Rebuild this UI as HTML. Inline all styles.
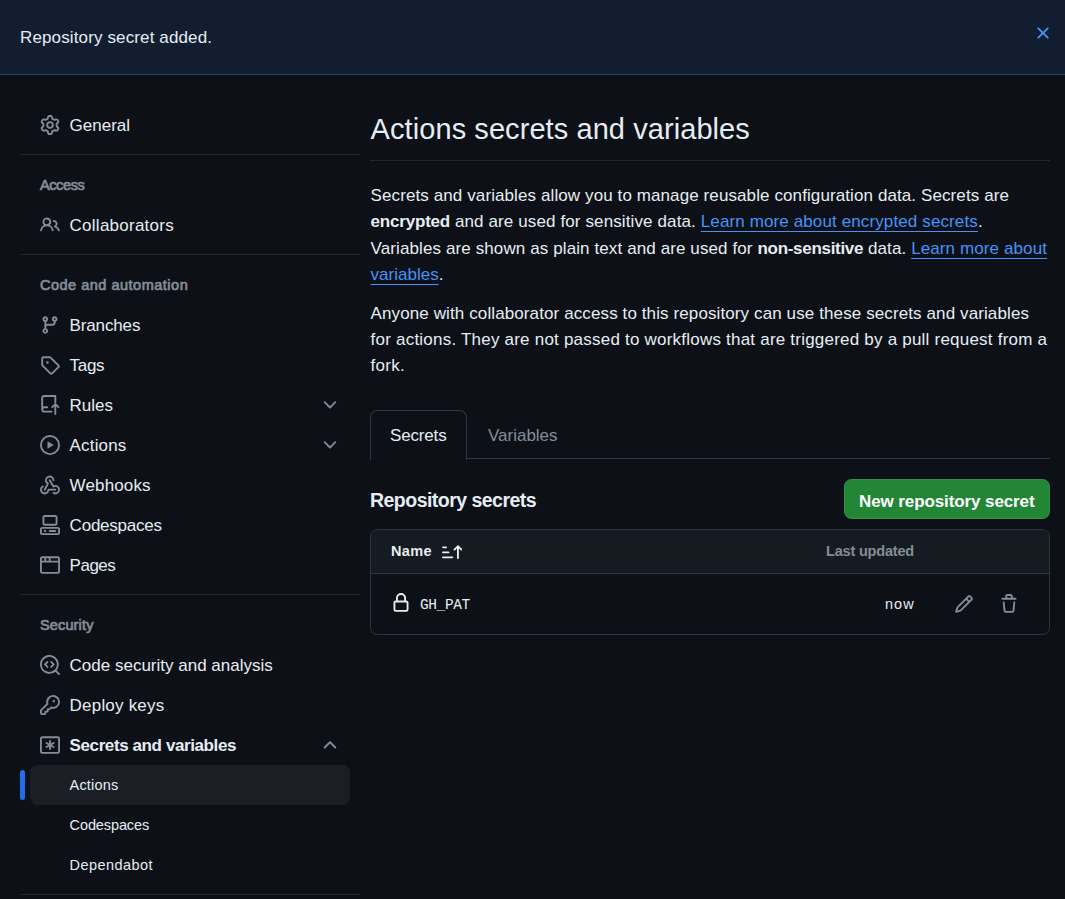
<!DOCTYPE html>
<html lang="en">
<head>
<meta charset="utf-8">
<title>Actions secrets and variables</title>
<style>
*{box-sizing:border-box;margin:0;padding:0}
html,body{width:1065px;height:899px;overflow:hidden;background:#0d1117}
body{font-family:"Liberation Sans",sans-serif;color:#e6edf3;font-size:17px;position:relative}
svg{display:block;fill:currentColor}
.flash{position:absolute;left:0;top:0;width:1065px;height:75px;background:#121d2f;border-bottom:1px solid #1f4478}
.flash .msg{position:absolute;left:20px;top:25px;line-height:26px;white-space:nowrap}
.flash .x{position:absolute;left:1033px;top:23px;width:20px;height:20px;color:#4493f8}
.side{position:absolute;left:20px;top:105px;width:340px}
.item{position:relative;height:40px;margin:0 10px;border-radius:7.5px}
.item .ic{position:absolute;left:10px;top:10px;width:20px;height:20px;color:#848d97}
.item .tx{position:absolute;left:39.6px;top:1px;line-height:40px;white-space:nowrap}
.item .ch{position:absolute;left:290px;top:10px;width:20px;height:20px;color:#848d97}
.item.b .tx{font-weight:bold}
.sub .tx{font-size:14.5px;top:0}
.sub.act{background:#1b1f25}
.sub.act:before{content:"";position:absolute;left:-10px;top:5px;width:5px;height:30px;border-radius:3px;background:#1f6feb}
.hr{height:1px;background:#21262d;margin:9px 0 10px}
.hd{height:40px;padding:0 20px;line-height:40px;font-size:14.5px;font-weight:normal;-webkit-text-stroke:0.7px currentColor;color:#848d97;white-space:nowrap}
.main{position:absolute;left:370px;top:0;width:680px}
h1{position:absolute;left:0.6px;top:109px;font-size:29px;font-weight:normal;line-height:40px;white-space:nowrap}
.mhr{position:absolute;left:0;top:160px;width:680px;height:1px;background:#21262d}
.ln{position:absolute;left:0.6px;line-height:26px;white-space:nowrap}
a{color:#4493f8;text-decoration:underline;text-underline-offset:4px;text-decoration-thickness:1px}
b{font-weight:bold}
.tabline{position:absolute;left:0;top:458px;width:680px;height:1px;background:#30363d}
.tab{position:absolute;top:410px;height:49px;line-height:50px;white-space:nowrap}
.tab.sel{left:0;width:97px;height:50px;border:1px solid #30363d;border-bottom:0;border-radius:7.5px 7.5px 0 0;background:#0d1117}
.tab.sel span{position:absolute;left:20px;top:0}
.tab.var{left:118px;color:#848d97;top:411px}
h2{position:absolute;left:0;top:485px;font-size:19.5px;line-height:30px;font-weight:bold;white-space:nowrap}
.btn{position:absolute;left:474px;top:479px;width:206px;height:40px;border-radius:7.5px;background:#238636;border:1px solid #34904a;color:#fff;font-weight:bold;line-height:43px;white-space:nowrap}
.btn span{position:absolute;left:15px;top:0}
.tbl{position:absolute;left:0;top:529px;width:680px;height:106px;border:1px solid #30363d;border-radius:7.5px;overflow:hidden}
.th{position:absolute;left:0;top:0;width:678px;height:44px;background:#161b22;border-bottom:1px solid #30363d;font-size:14.5px;line-height:44px;white-space:nowrap}
.th .name{position:absolute;left:20px;top:-1px;font-weight:bold}
.th .sort{position:absolute;left:71px;top:12px;width:20px;height:20px}
.th .lu{position:absolute;left:455px;top:-1px;color:#848d97;font-weight:bold}
.tr{position:absolute;left:0;top:44px;width:678px;height:60px}
.tr .lock{position:absolute;left:20px;top:19px;width:20px;height:20px}
.tr .code{white-space:nowrap;position:absolute;left:50px;top:19px;line-height:24px;font-family:"Liberation Mono",monospace;font-size:14.5px}
.tr .now{position:absolute;left:515px;top:18px;white-space:nowrap;line-height:24px;font-size:14.5px}
.tr .pen{position:absolute;left:583px;top:20px;width:20px;height:20px;color:#848d97}
.tr .trash{position:absolute;left:628px;top:20px;width:20px;height:20px;color:#848d97}
/*FIT*/
#msg{letter-spacing:0.131px}
#t1{letter-spacing:-0.001px}
#t2{letter-spacing:0.251px}
#t3{letter-spacing:-0.142px}
#t4{letter-spacing:-0.335px}
#t5{letter-spacing:0.000px}
#t6{letter-spacing:0.166px}
#t7{letter-spacing:0.140px}
#t8{letter-spacing:-0.222px}
#t9{letter-spacing:-0.500px}
#t10{letter-spacing:-0.000px}
#t11{letter-spacing:0.200px}
#t12{letter-spacing:-0.400px}
#t13{letter-spacing:0.167px}
#t14{letter-spacing:-0.112px}
#t15{letter-spacing:0.446px}
#h1{letter-spacing:-0.400px}
#h2{letter-spacing:0.502px}
#h3{letter-spacing:0.143px}
#ttl{letter-spacing:0.072px}
#l1{letter-spacing:0.099px}
#l2{letter-spacing:0.119px}
#l3{letter-spacing:0.106px}
#l4{letter-spacing:0.001px}
#l5{letter-spacing:0.108px}
#l6{letter-spacing:0.216px}
#l7{letter-spacing:0.250px}
#tabs{letter-spacing:-0.167px;margin-left:-1.00px}
#tabv{letter-spacing:-0.005px;margin-left:0.00px}
#rs{letter-spacing:-0.528px}
#btn{letter-spacing:-0.100px;margin-left:-1.00px}
#name{letter-spacing:0.332px;margin-left:0.00px}
#lu{letter-spacing:-0.184px;margin-left:-0.00px}
#code{letter-spacing:-0.400px;margin-left:-1.00px}
#now{letter-spacing:1.000px;margin-left:-1.00px}
/*ENDFIT*/
#l2 b{letter-spacing:-0.2px}
#l3 b{letter-spacing:-0.3px}
</style>
</head>
<body>
<div class="flash">
  <div class="msg" id="msg">Repository secret added.</div>
  <svg class="x" viewBox="0 0 16 16"><path d="M3.72 3.72a.75.75 0 0 1 1.06 0L8 6.94l3.22-3.22a.749.749 0 0 1 1.275.326.749.749 0 0 1-.215.734L9.06 8l3.22 3.22a.749.749 0 0 1-.326 1.275.749.749 0 0 1-.734-.215L8 9.06l-3.22 3.22a.751.751 0 0 1-1.042-.018.751.751 0 0 1-.018-1.042L6.94 8 3.72 4.78a.75.75 0 0 1 0-1.06Z"/></svg>
</div>
<div class="side" id="side">
  <div class="item"><svg class="ic" viewBox="0 0 16 16"><path d="M8 0a8.2 8.2 0 0 1 .701.031C9.444.095 9.99.645 10.16 1.29l.288 1.107c.018.066.079.158.212.224.231.114.454.243.668.386.123.082.233.09.299.071l1.103-.303c.644-.176 1.392.021 1.82.63.27.385.506.792.704 1.218.315.675.111 1.422-.364 1.891l-.814.806c-.049.048-.098.147-.088.294.016.257.016.515 0 .772-.01.147.038.246.088.294l.814.806c.475.469.679 1.216.364 1.891a7.977 7.977 0 0 1-.704 1.217c-.428.61-1.176.807-1.82.63l-1.102-.302c-.067-.019-.177-.011-.3.071a5.909 5.909 0 0 1-.668.386c-.133.066-.194.158-.211.224l-.29 1.106c-.168.646-.715 1.196-1.458 1.26a8.006 8.006 0 0 1-1.402 0c-.743-.064-1.289-.614-1.458-1.26l-.289-1.106c-.018-.066-.079-.158-.212-.224a5.738 5.738 0 0 1-.668-.386c-.123-.082-.233-.09-.299-.071l-1.103.303c-.644.176-1.392-.021-1.82-.63a8.12 8.12 0 0 1-.704-1.218c-.315-.675-.111-1.422.363-1.891l.815-.806c.05-.048.098-.147.088-.294a6.214 6.214 0 0 1 0-.772c.01-.147-.038-.246-.088-.294l-.815-.806C.635 6.045.431 5.298.746 4.623a7.92 7.92 0 0 1 .704-1.217c.428-.61 1.176-.807 1.82-.63l1.102.302c.067.019.177.011.3-.071.214-.143.437-.272.668-.386.133-.066.194-.158.211-.224l.29-1.106C6.009.645 6.556.095 7.299.03 7.53.01 7.764 0 8 0Zm-.571 1.525c-.036.003-.108.036-.137.146l-.289 1.105c-.147.561-.549.967-.998 1.189-.173.086-.34.183-.5.29-.417.278-.97.423-1.529.27l-1.103-.303c-.109-.03-.175.016-.195.045-.22.312-.412.644-.573.99-.014.031-.021.11.059.19l.815.806c.411.406.562.957.53 1.456a4.709 4.709 0 0 0 0 .582c.032.499-.119 1.05-.53 1.456l-.815.806c-.081.08-.073.159-.059.19.162.346.353.677.573.989.02.03.085.076.195.046l1.102-.303c.56-.153 1.113-.008 1.53.27.161.107.328.204.501.29.447.222.85.629.997 1.189l.289 1.105c.029.109.101.143.137.146a6.6 6.6 0 0 0 1.142 0c.036-.003.108-.036.137-.146l.289-1.105c.147-.561.549-.967.998-1.189.173-.086.34-.183.5-.29.417-.278.97-.423 1.529-.27l1.103.303c.109.029.175-.016.195-.045.22-.313.411-.644.573-.99.014-.031.021-.11-.059-.19l-.815-.806c-.411-.406-.562-.957-.53-1.456a4.709 4.709 0 0 0 0-.582c-.032-.499.119-1.05.53-1.456l.815-.806c.081-.08.073-.159.059-.19a6.464 6.464 0 0 0-.573-.989c-.02-.03-.085-.076-.195-.046l-1.102.303c-.56.153-1.113.008-1.53-.27a4.44 4.44 0 0 0-.501-.29c-.447-.222-.85-.629-.997-1.189l-.289-1.105c-.029-.11-.101-.143-.137-.146a6.6 6.6 0 0 0-1.142 0ZM11 8a3 3 0 1 1-6 0 3 3 0 0 1 6 0ZM9.5 8a1.5 1.5 0 1 0-3.001.001A1.5 1.5 0 0 0 9.500 8Z"/></svg><span class="tx" id="t1">General</span></div>
  <div class="hr"></div>
  <div class="hd"><span id="h1">Access</span></div>
  <div class="item"><svg class="ic" viewBox="0 0 16 16"><path d="M2 5.5a3.5 3.5 0 1 1 5.898 2.549 5.508 5.508 0 0 1 3.034 4.084.75.75 0 1 1-1.482.235 4 4 0 0 0-7.9 0 .75.75 0 0 1-1.482-.236A5.507 5.507 0 0 1 3.102 8.05 3.493 3.493 0 0 1 2 5.5ZM11 4a3.001 3.001 0 0 1 2.22 5.018 5.01 5.01 0 0 1 2.56 3.012.749.749 0 0 1-.885.954.752.752 0 0 1-.549-.514 3.507 3.507 0 0 0-2.522-2.372.75.75 0 0 1-.574-.73v-.352a.75.75 0 0 1 .416-.672A1.5 1.5 0 0 0 11 5.5.75.75 0 0 1 11 4Zm-5.5-.5a2 2 0 1 0-.001 3.999A2 2 0 0 0 5.5 3.5Z"/></svg><span class="tx" id="t2">Collaborators</span></div>
  <div class="hr"></div>
  <div class="hd"><span id="h2">Code and automation</span></div>
  <div class="item"><svg class="ic" viewBox="0 0 16 16"><path d="M9.5 3.25a2.25 2.25 0 1 1 3 2.122V6A2.5 2.5 0 0 1 10 8.5H6a1 1 0 0 0-1 1v1.128a2.251 2.251 0 1 1-1.5 0V5.372a2.25 2.25 0 1 1 1.5 0v1.836A2.493 2.493 0 0 1 6 7h4a1 1 0 0 0 1-1v-.628A2.25 2.25 0 0 1 9.5 3.25Zm-6 0a.75.75 0 1 0 1.5 0 .75.75 0 0 0-1.500 0Zm8.25-.75a.75.75 0 1 0 0 1.5.75.75 0 0 0 0-1.500ZM4.250 12a.75.75 0 1 0 0 1.5.75.75 0 0 0 0-1.500Z"/></svg><span class="tx" id="t3">Branches</span></div>
  <div class="item"><svg class="ic" viewBox="0 0 16 16"><path d="M1 7.775V2.75C1 1.784 1.784 1 2.75 1h5.025c.464 0 .91.184 1.238.513l6.25 6.25a1.75 1.750 0 0 1 0 2.474l-5.026 5.026a1.75 1.750 0 0 1-2.474 0l-6.25-6.250A1.752 1.752 0 0 1 1 7.775Zm1.500 0c0 .066.026.13.073.177l6.25 6.25a.25.250 0 0 0 .354 0l5.025-5.025a.25.250 0 0 0 0-.354l-6.250-6.250a.25.250 0 0 0-.177-.073H2.750a.25.250 0 0 0-.250.250ZM6 5a1 1 0 1 1 0 2 1 1 0 0 1 0-2Z"/></svg><span class="tx" id="t4">Tags</span></div>
  <div class="item"><svg class="ic" viewBox="0 0 16 16"><path d="M1 2.5A2.5 2.5 0 0 1 3.5 0h8.75a.75.75 0 0 1 .75.75v5.5a.75.75 0 0 1-1.5 0V1.500h-8a1 1 0 0 0-1 1v6.708A2.493 2.493 0 0 1 3.500 9h2.250a.75.75 0 0 1 0 1.500H3.500a1 1 0 0 0 0 2h5.750a.75.75 0 0 1 0 1.500H3.500A2.500 2.500 0 0 1 1 11.500Zm13.230 7.790h-.001l-1.224-1.224v6.184a.75.75 0 0 1-1.500 0V9.066L10.280 10.290a.75.75 0 0 1-1.060-1.061l2.505-2.504a.75.75 0 0 1 1.060 0L15.290 9.230a.751.751 0 0 1-.018 1.042.751.751 0 0 1-1.042.018Z"/></svg><span class="tx" id="t5">Rules</span><svg class="ch" viewBox="0 0 16 16"><path d="M12.78 5.22a.749.749 0 0 1 0 1.06l-4.25 4.25a.749.749 0 0 1-1.060 0L3.220 6.280a.749.749 0 1 1 1.060-1.060L8 8.939l3.720-3.719a.749.749 0 0 1 1.060 0Z"/></svg></div>
  <div class="item"><svg class="ic" viewBox="0 0 16 16"><path d="M8 0a8 8 0 1 1 0 16A8 8 0 0 1 8 0ZM1.5 8a6.5 6.5 0 1 0 13 0 6.5 6.5 0 0 0-13 0Zm4.879-2.773 4.264 2.559a.25.250 0 0 1 0 .428l-4.264 2.559A.25.250 0 0 1 6 10.559V5.442a.25.250 0 0 1 .379-.215Z"/></svg><span class="tx" id="t6">Actions</span><svg class="ch" viewBox="0 0 16 16"><path d="M12.78 5.22a.749.749 0 0 1 0 1.06l-4.25 4.25a.749.749 0 0 1-1.060 0L3.220 6.280a.749.749 0 1 1 1.060-1.060L8 8.939l3.720-3.719a.749.749 0 0 1 1.060 0Z"/></svg></div>
  <div class="item"><svg class="ic" viewBox="0 0 16 16"><path d="M5.5 4.25a2.25 2.25 0 0 1 4.5 0 .75.75 0 0 0 1.5 0 3.75 3.75 0 1 0-6.14 2.889l-2.272 4.258a.75.75 0 0 0 1.324.706L7 7.25a.75.75 0 0 0-.309-1.015A2.25 2.250 0 0 1 5.500 4.250Z"/><path d="M7.364 3.607a.75.75 0 0 1 1.03.257l2.608 4.349a3.75 3.750 0 1 1-.628 6.785.75.75 0 0 1 .752-1.299 2.25 2.250 0 1 0-.033-3.880.75.75 0 0 1-1.030-.256L7.107 4.636a.75.75 0 0 1 .257-1.030Z"/><path d="M2.9 8.776A.75.75 0 0 1 2.625 9.8 2.25 2.250 0 1 0 6 11.750a.75.75 0 0 1 .75-.751h5.500a.75.75 0 0 1 0 1.500H7.425a3.751 3.751 0 1 1-5.550-3.998.75.75 0 0 1 1.024.274Z"/></svg><span class="tx" id="t7">Webhooks</span></div>
  <div class="item"><svg class="ic" viewBox="0 0 16 16"><path d="M0 11.25c0-.966.784-1.75 1.75-1.75h12.500c.966 0 1.750.784 1.750 1.750v3A1.750 1.750 0 0 1 14.250 16H1.750A1.750 1.750 0 0 1 0 14.250Zm2-9.500C2 .784 2.784 0 3.750 0h8.500C13.216 0 14 .784 14 1.750v5a1.750 1.750 0 0 1-1.750 1.750h-8.500A1.750 1.750 0 0 1 2 6.750Zm1.750-.25a.25.250 0 0 0-.250.250v5c0 .138.112.250.250.250h8.500a.25.250 0 0 0 .250-.250v-5a.25.250 0 0 0-.250-.250Zm-2 9.500a.25.250 0 0 0-.250.250v3c0 .138.112.250.250.250h12.500a.25.250 0 0 0 .250-.250v-3a.25.250 0 0 0-.250-.250Z"/><path d="M7 12.750a.75.75 0 0 1 .75-.75h4.500a.75.75 0 0 1 0 1.500h-4.500a.75.75 0 0 1-.750-.750Zm-4 0a.75.75 0 0 1 .75-.75h.5a.75.75 0 0 1 0 1.500h-.500a.75.75 0 0 1-.750-.750Z"/></svg><span class="tx" id="t8">Codespaces</span></div>
  <div class="item"><svg class="ic" viewBox="0 0 16 16"><path d="M0 2.75C0 1.784.784 1 1.75 1h12.500c.966 0 1.750.784 1.750 1.750v10.500A1.750 1.750 0 0 1 14.250 15H1.750A1.750 1.750 0 0 1 0 13.250ZM14.500 6h-13v7.250c0 .138.112.250.250.250h12.500a.25.250 0 0 0 .250-.250Zm-6-3.500v2h6V2.750a.25.250 0 0 0-.250-.250ZM5 2.500v2h2v-2Zm-3.250 0a.25.250 0 0 0-.250.250V4.500h2v-2Z"/></svg><span class="tx" id="t9">Pages</span></div>
  <div class="hr"></div>
  <div class="hd"><span id="h3">Security</span></div>
  <div class="item"><svg class="ic" viewBox="0 0 16 16"><path d="M8.47 4.97a.75.75 0 0 0 0 1.060L9.940 7.500 8.470 8.970a.75.75 0 1 0 1.060 1.060l2-2a.75.75 0 0 0 0-1.060l-2-2a.75.75 0 0 0-1.060 0ZM6.530 6.030a.75.75 0 0 0-1.060-1.060l-2 2a.75.75 0 0 0 0 1.060l2 2a.75.75 0 1 0 1.060-1.060L5.060 7.500l1.470-1.470Z"/><path d="M12.246 13.307a7.501 7.501 0 1 1 1.06-1.06l2.474 2.473a.749.749 0 0 1-.326 1.275.749.749 0 0 1-.734-.215ZM1.500 7.500a6.002 6.002 0 0 0 3.608 5.504 6.002 6.002 0 0 0 6.486-1.117.748.748 0 0 1 .292-.293A6 6 0 1 0 1.500 7.500Z"/></svg><span class="tx" id="t10">Code security and analysis</span></div>
  <div class="item"><svg class="ic" viewBox="0 0 16 16"><path d="M10.5 0a5.499 5.499 0 1 1-1.288 10.848l-.932.932a.749.749 0 0 1-.53.22H7v.75a.749.749 0 0 1-.22.53l-.5.5a.749.749 0 0 1-.53.22H5v.75a.749.749 0 0 1-.22.53l-.5.5a.749.749 0 0 1-.53.22h-2A1.750 1.750 0 0 1 0 14.250v-2c0-.199.079-.389.220-.530l4.932-4.932A5.500 5.500 0 0 1 10.500 0Zm-4 5.500c-.001.431.069.860.205 1.269a.75.75 0 0 1-.181.768L1.500 12.560v1.690c0 .138.112.250.250.250h1.690l.060-.060v-1.190a.75.75 0 0 1 .75-.75h1.190l.060-.060v-1.190a.75.75 0 0 1 .75-.75h1.190l1.023-1.025a.75.75 0 0 1 .768-.180A4 4 0 1 0 6.500 5.500ZM11 6a1 1 0 1 1 0-2 1 1 0 0 1 0 2Z"/></svg><span class="tx" id="t11">Deploy keys</span></div>
  <div class="item b"><svg class="ic" viewBox="0 0 16 16"><path d="M0 2.75C0 1.784.784 1 1.75 1h12.500c.966 0 1.750.784 1.750 1.750v10.500A1.750 1.750 0 0 1 14.250 15H1.750A1.750 1.750 0 0 1 0 13.250Zm1.750-.25a.25.250 0 0 0-.250.250v10.500c0 .138.112.250.250.250h12.500a.25.250 0 0 0 .250-.250V2.750a.25.250 0 0 0-.250-.250Z"/><path d="M8 4a.75.75 0 0 1 .75.75V6.700l1.690-.975a.75.75 0 0 1 .75 1.300L9.500 8l1.690.976a.75.75 0 0 1-.75 1.298L8.750 9.300v1.950a.75.75 0 0 1-1.500 0V9.300l-1.690.975a.75.75 0 0 1-.75-1.300L6.500 8l-1.690-.975a.75.75 0 0 1 .75-1.300l1.690.976V4.750A.75.75 0 0 1 8 4Z"/></svg><span class="tx" id="t12">Secrets and variables</span><svg class="ch" viewBox="0 0 16 16"><path d="M3.22 10.53a.749.749 0 0 1 0-1.06l4.25-4.25a.749.749 0 0 1 1.06 0l4.25 4.25a.749.749 0 1 1-1.06 1.06L8 6.811 4.280 10.530a.749.749 0 0 1-1.060 0Z"/></svg></div>
  <div class="item sub act"><span class="tx" id="t13">Actions</span></div>
  <div class="item sub"><span class="tx" id="t14">Codespaces</span></div>
  <div class="item sub"><span class="tx" id="t15">Dependabot</span></div>
  <div class="hr"></div>
</div>
<div class="main" id="main">
  <h1 id="ttl">Actions secrets and variables</h1>
  <div class="mhr"></div>
  <div class="ln" id="l1" style="top:183px">Secrets and variables allow you to manage reusable configuration data. Secrets are</div>
  <div class="ln" id="l2" style="top:209px"><b>encrypted</b> and are used for sensitive data. <a>Learn more about encrypted secrets</a>.</div>
  <div class="ln" id="l3" style="top:236px">Variables are shown as plain text and are used for <b>non-sensitive</b> data. <a>Learn more about</a></div>
  <div class="ln" id="l4" style="top:262px"><a>variables</a>.</div>
  <div class="ln" id="l5" style="top:301px">Anyone with collaborator access to this repository can use these secrets and variables</div>
  <div class="ln" id="l6" style="top:327px">for actions. They are not passed to workflows that are triggered by a pull request from a</div>
  <div class="ln" id="l7" style="top:353px">fork.</div>
  <div class="tabline"></div>
  <div class="tab sel"><span id="tabs">Secrets</span></div>
  <div class="tab var"><span id="tabv">Variables</span></div>
  <h2 id="rs">Repository secrets</h2>
  <div class="btn"><span id="btn">New repository secret</span></div>
  <div class="tbl">
    <div class="th">
      <span class="name" id="name">Name</span>
      <svg class="sort" viewBox="0 0 16 16"><path d="M0 12.25a.75.75 0 0 1 .75-.75h7.5a.75.75 0 0 1 0 1.5H.75a.75.75 0 0 1-.75-.75Zm0-4a.75.75 0 0 1 .75-.75h4.5a.75.75 0 0 1 0 1.5H.75A.75.75 0 0 1 0 8.25Zm0-4a.75.75 0 0 1 .75-.75h2.5a.75.75 0 0 1 0 1.5H.75A.75.75 0 0 1 0 4.25Z"/><path d="M12.75 12.75V3.6M10 6.1l2.75-2.75L15.5 6.1" fill="none" stroke="currentColor" stroke-width="1.5" stroke-linecap="round" stroke-linejoin="round"/></svg>
      <span class="lu" id="lu">Last updated</span>
    </div>
    <div class="tr">
      <svg class="lock" viewBox="0 0 16 16"><path d="M4 4a4 4 0 0 1 8 0v2h.25c.966 0 1.75.784 1.75 1.75v5.5A1.75 1.75 0 0 1 12.25 15h-8.500A1.750 1.750 0 0 1 2 13.250v-5.500C2 6.784 2.784 6 3.750 6H4Zm8.250 3.500h-8.500a.25.250 0 0 0-.250.250v5.500c0 .138.112.250.250.250h8.500a.25.250 0 0 0 .250-.250v-5.500a.25.250 0 0 0-.250-.250ZM10.500 6V4a2.500 2.500 0 1 0-5 0v2Z"/></svg>
      <span class="code" id="code">GH_PAT</span>
      <span class="now" id="now">now</span>
      <svg class="pen" viewBox="0 0 16 16"><path d="M11.013 1.427a1.75 1.75 0 0 1 2.474 0l1.086 1.086a1.75 1.750 0 0 1 0 2.474l-8.610 8.610c-.21.21-.47.364-.756.445l-3.251.93a.75.75 0 0 1-.927-.928l.929-3.25c.081-.286.235-.547.445-.758l8.610-8.610Zm.176 4.823L9.750 4.810l-6.286 6.287a.253.253 0 0 0-.064.108l-.558 1.953 1.953-.558a.253.253 0 0 0 .108-.064Zm1.238-3.763a.25.250 0 0 0-.354 0L10.811 3.750l1.439 1.440 1.263-1.263a.25.250 0 0 0 0-.354Z"/></svg>
      <svg class="trash" viewBox="0 0 16 16"><path d="M11 1.75V3h2.25a.75.75 0 0 1 0 1.500H2.750a.75.75 0 0 1 0-1.500H5V1.750C5 .784 5.784 0 6.750 0h2.500C10.216 0 11 .784 11 1.750ZM4.496 6.675l.66 6.600a.25.250 0 0 0 .249.225h5.190a.25.250 0 0 0 .249-.225l.66-6.600a.75.75 0 0 1 1.492.149l-.66 6.600A1.748 1.748 0 0 1 10.595 15h-5.190a1.750 1.750 0 0 1-1.741-1.575l-.66-6.600a.75.75 0 1 1 1.492-.150ZM6.500 1.750V3h3V1.750a.25.250 0 0 0-.250-.250h-2.500a.25.250 0 0 0-.250.250Z"/></svg>
    </div>
  </div>
</div>
</body>
</html>
